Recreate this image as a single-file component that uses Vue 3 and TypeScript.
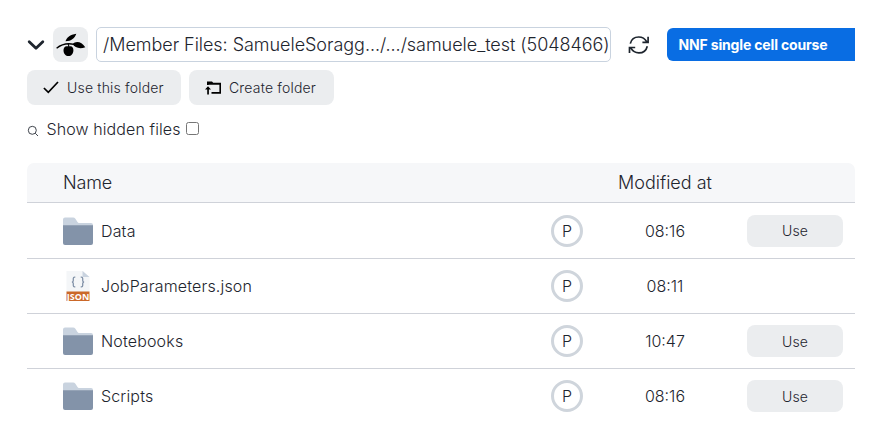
<script setup lang="ts">
import { ref } from 'vue'

interface Entry {
  name: string
  kind: 'folder' | 'json'
  modified: string
}

const entries: Entry[] = [
  { name: 'Data', kind: 'folder', modified: '08:16' },
  { name: 'JobParameters.json', kind: 'json', modified: '08:11' },
  { name: 'Notebooks', kind: 'folder', modified: '10:47' },
  { name: 'Scripts', kind: 'folder', modified: '08:16' },
]
const showHidden = ref(false)
</script>

<template>
  <main class="browser">
    <header class="topbar">
      <svg class="chevron" width="18" height="12" viewBox="0 0 18 12"><path d="M2.2 2.7 9 9.3l6.8-6.6" /></svg>
      <button class="logo" aria-label="Drive">
        <svg width="30" height="26" viewBox="0 0 30 26">
          <path d="M.6 16.200C5.500 12.200 11 10.800 18 12.300" fill="none" stroke="#000" stroke-width="1.300" />
          <path d="M9.500 9.200C10.500 5.500 14 2.600 20.300 1.700 18.800 6 15.500 9.200 9.500 9.200Z" />
          <path d="M16.600 12.100C19.500 8.700 25.500 9.200 29.300 15.200 24.500 17 18.800 16.300 16.600 12.100Z" />
          <path d="M12 11.500c.8 1.300 1 2.500.7 4" fill="none" stroke="#000" stroke-width="1.200" />
          <path d="M12.500 14.600c3-1.400 5.100.5 4.900 3.900-.2 3.300-2.100 5.600-4.900 5.600s-4.800-2.200-5-5.300c-.2-3.700 2.100-5.500 5-4.200Z" />
        </svg>
      </button>
      <div class="path"><span>/Member Files: SamueleSoragg.../.../samuele_test (5048466)</span></div>
      <svg class="refresh" width="22" height="20" viewBox="0 0 22 20">
        <path d="M2.300 8.600C3.300 4.600 6.600 2 10.700 2c3.500 0 6.300 1.600 8 4.700M20.100 1.800v5.500h-5.700M19.300 11.200c-1 4-4.300 6.700-8.400 6.700-3.500 0-6.300-1.700-8-4.700M1.500 18v-5.500h5.700" />
      </svg>
      <div class="project">NNF single cell course</div>
    </header>

    <div class="actions">
      <button class="action use-folder">
        <svg width="16" height="13" viewBox="0 0 16 13"><path d="M.9 7 5.300 11.400 15 1" fill="none" stroke="#000" stroke-width="1.700" /></svg>
        <span>Use this folder</span>
      </button>
      <button class="action create-folder">
        <svg width="17" height="14" viewBox="0 0 17 14">
          <path d="M2 4V.5h5l1.200 1.200H16V12.700H6.500V11H14.400V3.800H3.600V4Z" />
          <path d="M3 5.200 6 8.600H3.900V13.500H2.200V8.600H0Z" />
        </svg>
        <span>Create folder</span>
      </button>
    </div>

    <label class="hidden-files">
      <svg width="12" height="12" viewBox="0 0 12 12"><circle cx="5.300" cy="5.300" r="4" /><path d="m8.300 8.300 2.700 2.700" /></svg>
      <span>Show hidden files</span>
      <input v-model="showHidden" type="checkbox">
    </label>

    <section class="table">
      <div class="row head">
        <span class="name-head">Name</span><span></span><span class="modified-head">Modified at</span><span></span>
      </div>
      <div v-for="entry in entries" :key="entry.name" class="row">
        <div class="name">
          <svg v-if="entry.kind === 'folder'" class="icon" width="30" height="30" viewBox="0 0 30 30">
            <path d="M0 3.500Q0 1.500 2 1.500H10Q11.500 1.500 12.400 2.800L14.500 6Q15 6.900 16 6.900H28Q30 6.900 30 8.900V13H0Z" fill="#c9d3df" />
            <path d="M0 9.200H30V27Q30 29 28 29H2Q0 29 0 27Z" fill="#8393a9" />
          </svg>
          <svg v-else class="icon" width="30" height="30" viewBox="0 0 30 30">
            <path d="M3.500 0H20l6.500 6V21h-23Z" fill="#f4f6f8" />
            <path d="M19.500 0v6h7Z" fill="#c9d3df" />
            <path d="M12.300 6.200h-.7q-1.300 0-1.300 1.200v2q0 1.400-1.300 1.600 1.300.2 1.300 1.600v2q0 1.200 1.300 1.200h.7M17.700 6.200h.7q1.300 0 1.300 1.200v2q0 1.400 1.300 1.600-1.300.2-1.300 1.600v2q0 1.200-1.300 1.200h-.7" fill="none" stroke="#8393a9" stroke-width="1.300" />
            <path d="M3.500 20.500h23v9.500h-23Z" fill="#cb6829" />
            <text x="15" y="28.500" text-anchor="middle" class="json-label" textLength="22.500" lengthAdjust="spacingAndGlyphs">JSON</text>
          </svg>
          <span>{{ entry.name }}</span>
        </div>
        <div class="badge">P</div>
        <time>{{ entry.modified }}</time>
        <button v-if="entry.kind === 'folder'" class="use">Use</button>
      </div>
    </section>
  </main>
</template>

<style>
body { margin: 0; background: #fff; }
</style>

<style scoped>
.browser { box-sizing: border-box; width: 884px; height: 431px; padding: 27px 29px 0 27px; overflow: hidden; font-family: Inter, sans-serif; font-weight: 300; color: #1e252e; }
button { border: 0; padding: 0; font: inherit; color: inherit; background: #ebedef; }
span { white-space: nowrap; }
.topbar { display: flex; align-items: center; height: 35px; }
.chevron { flex: none; fill: none; stroke: #1e252e; stroke-width: 2.800; stroke-linecap: round; stroke-linejoin: round; }
.logo { display: flex; align-items: center; justify-content: center; width: 35px; height: 35px; margin-left: 8px; border-radius: 8px; }
.path { box-sizing: border-box; display: flex; align-items: center; width: 515px; height: 35px; margin-left: 8px; padding-left: 6px; border: 1px solid #c9d3df; border-radius: 5px; font-size: 18px; letter-spacing: -.04px; }
.refresh { flex: none; margin-left: 17px; fill: none; stroke: #1e252e; stroke-width: 1.700; }
.project { box-sizing: border-box; width: 188px; height: 33px; margin-left: 17px; padding-left: 11.500px; border-radius: 6px 0 0 6px; background: #096de3; color: #fff; font-size: 14px; line-height: 34px; font-weight: 700; white-space: nowrap; letter-spacing: -.16px; }
.actions { display: flex; gap: 8px; margin-top: 8px; }
.action { display: flex; align-items: center; height: 35px; border-radius: 8px; font-size: 14px; letter-spacing: .18px; }
.use-folder { width: 154px; padding-left: 16px; gap: 8px; }
.create-folder { width: 145px; padding-left: 16px; gap: 7px; }
.hidden-files { display: flex; align-items: center; height: 20px; margin-top: 14px; font-size: 16px; letter-spacing: .1px; }
.hidden-files svg { fill: none; stroke: #2a3039; stroke-width: .9; margin-top: 3px; }
.hidden-files span { margin-left: 7.500px; }
.hidden-files input { width: 13px; height: 13px; margin: -1px 0 0 5px; }
.table { margin-top: 24px; }
.row { box-sizing: border-box; display: grid; grid-template-columns: 524px 32px 164px 96px; align-items: center; height: 55px; border-bottom: 1px solid #cfd2d9; }
.row:nth-child(2) { height: 56px; }
.row:last-child { border-bottom-color: transparent; }
.head { height: 40px; border-radius: 7px 7px 0 0; background: #f6f7f9; font-size: 18px; }
.name-head { padding-left: 36px; letter-spacing: -.15px; }
.modified-head { text-align: center; }
.name { display: flex; align-items: center; gap: 8px; padding-left: 36px; font-size: 16px; letter-spacing: .16px; }
.icon { flex: none; }
.json-label { font: 700 9px "Noto Sans", sans-serif; fill: #fff; letter-spacing: 0; }
.badge { box-sizing: border-box; width: 32px; height: 32px; border: 3px solid #cfd5dc; border-radius: 50%; font-size: 16px; line-height: 27px; text-align: center; }
time { text-align: center; font-size: 16px; }
.use { height: 32px; border-radius: 8px; font-size: 14px; letter-spacing: .15px; }
</style>
